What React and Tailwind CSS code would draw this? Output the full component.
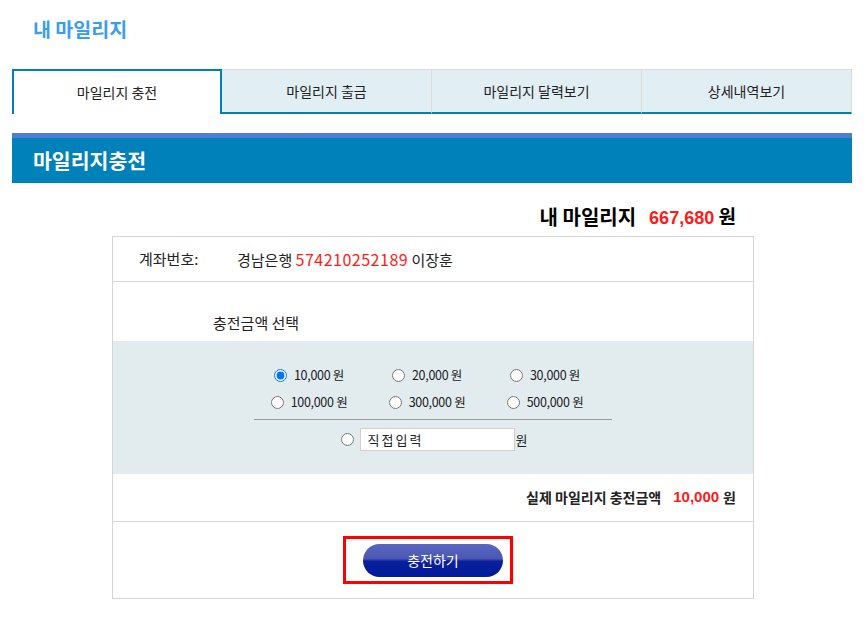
import React from "react";

const KR = { fontFamily: '"Noto Sans CJK KR", "Noto Sans", sans-serif' };
const ARIAL = { fontFamily: '"Liberation Sans", Arial, sans-serif' };

const tabs = ["마일리지 충전", "마일리지 출금", "마일리지 달력보기", "상세내역보기"];

const amounts = [
  ["10,000 원", "20,000 원", "30,000 원"],
  ["100,000 원", "300,000 원", "500,000 원"],
];

const Radio = ({ checked, name = "amt" }) => (
  <input
    type="radio"
    name={name}
    defaultChecked={checked}
    className="w-[13px] h-[13px] m-0 shrink-0"
  />
);

export default function App() {
  return (
    <div className="w-[867px] h-[639px] bg-white text-[#222]" style={KR}>
      <div className="w-[840px] ml-3">
        {/* page title */}
        <div className="h-[69px] pl-[21px] pt-[15px]">
          <h1 className="text-[19.5px] font-bold text-[#3a9cf2] leading-[28px]">
            내 마일리지
          </h1>
        </div>

        {/* tabs */}
        <div className="grid grid-cols-4 h-[45px]">
          {tabs.map((t, i) =>
            i === 0 ? (
              <div
                key={t}
                className="flex items-center justify-center bg-white border-2 border-b-0 border-[#0080b8] text-[14px]"
              >
                {t}
              </div>
            ) : (
              <div
                key={t}
                className="flex items-center justify-center bg-[#e1eef3] border-t border-t-[#dcdcdc] border-r border-r-[#dcdcdc] border-b-2 border-b-[#0080b8] text-[14px] pt-[1px]"
              >
                {t}
              </div>
            )
          )}
        </div>

        {/* section header */}
        <div className="mt-[19px] h-[50px] bg-[#0081b9] border-t-[5px] border-[#4a7fd6] flex items-center pl-[21px]">
          <h2 className="text-[20.5px] font-bold text-white">마일리지충전</h2>
        </div>

        {/* balance */}
        <div className="h-[53px] flex items-center justify-end pr-[116px] pt-[14px] gap-[13px]">
          <span className="text-[20px] font-bold text-black">내 마일리지</span>
          <span className="text-[19px] font-bold text-black">
            <span className="text-[#ff1a1a] text-[18px]" style={ARIAL}>
              667,680
            </span>{" "}
            원
          </span>
        </div>

        {/* charge box */}
        <div className="w-[642px] ml-[100px] border border-[#d5d5d5]">
          <div className="h-[45px] flex items-center border-b border-[#d5d5d5] text-[15px]">
            <span className="ml-[26px] w-[98px]">계좌번호:</span>
            <span>
              경남은행{" "}
              <span className="text-[#ff1a1a] text-[16px] tracking-[0.5px]">
                574210252189
              </span>{" "}
              이장훈
            </span>
          </div>

          <div className="h-[59px] flex items-end pb-[7px] pl-[100px] text-[15px]">
            충전금액 선택
          </div>

          {/* amount choices */}
          <div className="bg-[#e2ecef] h-[133px] pt-[21px]">
            {amounts.map((row, r) => (
              <div
                key={r}
                className="grid grid-cols-[118px_118px_118px] ml-[137px] h-[27px] items-center"
              >
                {row.map((a, c) => (
                  <label
                    key={a}
                    className="flex items-center justify-center gap-[7px] text-[12.5px] tracking-[-0.3px] text-[#1a1a1a]"
                  >
                    <Radio checked={r === 0 && c === 0} />
                    {a}
                  </label>
                ))}
              </div>
            ))}
            <div className="ml-[141px] w-[358px] h-px bg-[#9a9a9a] mt-[3px]" />
            <div className="flex items-center justify-center gap-[6px] mt-[8px] pl-[2px]">
              <Radio />
              <input
                type="text"
                defaultValue="직접입력"
                className="w-[155px] h-[23px] bg-white border border-[#d0d0d0] px-[7px] text-[13px] tracking-[2px] outline-none"
              />
              <span className="text-[13px] -ml-[5px]">원</span>
            </div>
          </div>

          <div className="h-[48px] flex items-center justify-end pr-[17px] border-b border-[#d5d5d5] text-[14px] font-bold">
            <span className="mr-[12px]">실제 마일리지 충전금액</span>
            <span className="text-[#ff1a1a] text-[15px] mr-[4px]" style={ARIAL}>
              10,000
            </span>
            <span>원</span>
          </div>

          <div className="h-[76px] flex justify-center pt-[14px]">
            <div className="w-[170px] h-[48px] border-[3px] border-[#ff0000] flex items-center justify-center mr-[10px]">
              <button
                className="w-[140px] h-[33px] ml-[10px] rounded-full text-white text-[14px] bg-[linear-gradient(to_bottom,#5a67bf_0%,#4a58b4_45%,#0a1f9c_52%,#001a99_100%)]"
                style={KR}
              >
                충전하기
              </button>
            </div>
          </div>
        </div>
      </div>
    </div>
  );
}
